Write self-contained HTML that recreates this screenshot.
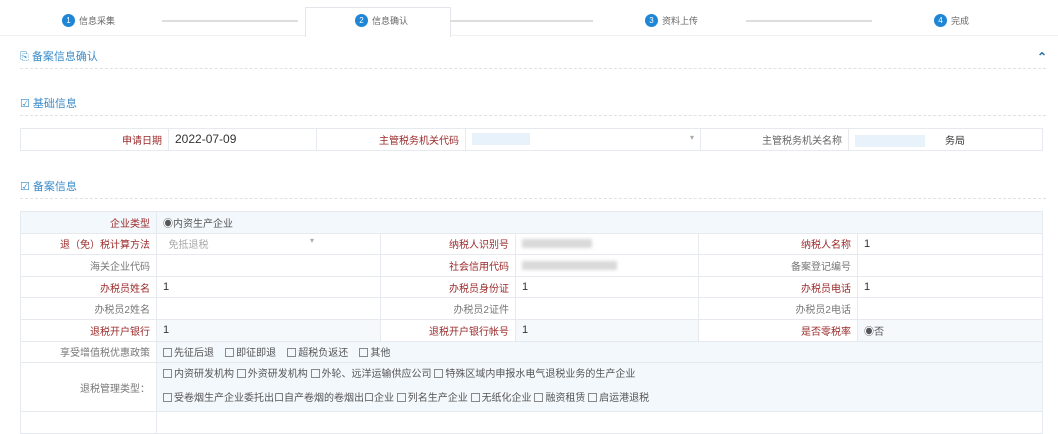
<!DOCTYPE html>
<html><head><meta charset="utf-8"><style>
*{margin:0;padding:0;box-sizing:border-box}
body{width:1058px;height:419px;overflow:hidden;background:#fff;font-family:"Liberation Sans","Noto Sans CJK SC",sans-serif;font-size:10px;color:#555;position:relative}
.abs{position:absolute}
.tabs{position:absolute;left:0;top:0;width:1058px;height:36px;border-bottom:1px solid #eef0f2}
.tab{position:absolute;top:14px;font-size:9px;color:#666;display:flex;align-items:center}
.num{width:13px;height:13px;border-radius:50%;background:#1f86d6;color:#fff;font-size:8px;display:inline-flex;align-items:center;justify-content:center;margin-right:4px}
.line{position:absolute;top:20px;height:2px;background:#ddd}
.act{position:absolute;left:305px;top:7px;width:146px;height:30px;border:1px solid #e3e6ea;border-bottom:none;background:#fff}
.sec{position:absolute;left:20px;color:#3a8cc8;font-size:11px}
.dash{position:absolute;left:20px;width:1026px;border-top:1px dashed #dde2e6}
table{position:absolute;border-collapse:collapse;table-layout:fixed}
td{border:1px solid #e6eaee;height:21.6px;padding:0 6px;white-space:nowrap;overflow:hidden}
td.l{text-align:right;color:#777}
td.r{color:#9a2a2a}
td.v{color:#333;font-size:11px}
.cb{display:inline-block;width:9px;height:9px;border:1px solid #888;vertical-align:-1px;margin-right:2px}
.blur{display:inline-block;height:9px;background:#d9d9d9;filter:blur(1.5px);vertical-align:middle}
</style></head><body>
<div class="tabs"></div>
<div class="act"></div>
<div class="tab" style="left:62px"><span class="num">1</span>信息采集</div>
<div class="line" style="left:162px;width:136px"></div>
<div class="tab" style="left:355px"><span class="num">2</span>信息确认</div>
<div class="line" style="left:450px;width:143px"></div>
<div class="tab" style="left:645px"><span class="num">3</span>资料上传</div>
<div class="line" style="left:746px;width:126px"></div>
<div class="tab" style="left:934px"><span class="num">4</span>完成</div>

<div class="sec" style="top:48px">⎘ 备案信息确认</div>
<div class="abs" style="left:1037px;top:50px;color:#2b6f9e;font-size:12px;font-weight:bold">⌃</div>
<div class="dash" style="top:68px"></div>
<div class="sec" style="top:95px">☑ 基础信息</div>
<div class="dash" style="top:115px"></div>

<table style="left:20px;top:128px;width:1022px">
<colgroup><col style="width:148px"><col style="width:148px"><col style="width:149px"><col style="width:235px"><col style="width:148px"><col style="width:194px"></colgroup>
<tr><td class="l r">申请日期</td><td class="v" style="font-size:12px">2022-07-09</td><td class="l r">主管税务机关代码</td><td><span style="display:inline-block;width:58px;height:12px;background:#e8f2fa;vertical-align:middle"></span><span style="float:right;color:#aaa;font-size:8px">▾</span></td><td class="l" style="color:#666">主管税务机关名称</td><td class="v"><span style="display:inline-block;width:70px;height:12px;background:#e8f2fa;vertical-align:middle"></span><span style="margin-left:20px;font-size:10px">务局</span></td></tr>
</table>

<div class="sec" style="top:178px">☑ 备案信息</div>
<div class="dash" style="top:198px"></div>

<table style="left:20px;top:211px;width:1022px">
<colgroup><col style="width:136px"><col style="width:224px"><col style="width:135px"><col style="width:183px"><col style="width:159px"><col style="width:185px"></colgroup>
<tr style="background:#f3f8fc"><td class="l r">企业类型</td><td colspan="5">◉内资生产企业</td></tr>
<tr><td class="l r">退（免）税计算方法</td><td style="color:#aaa">&nbsp;&nbsp;免抵退税<span style="float:right;margin-right:60px;font-size:8px">▾</span></td><td class="l r">纳税人识别号</td><td><span class="blur" style="width:70px"></span></td><td class="l r">纳税人名称</td><td class="v">1</td></tr>
<tr><td class="l">海关企业代码</td><td></td><td class="l r">社会信用代码</td><td><span class="blur" style="width:95px"></span></td><td class="l">备案登记编号</td><td></td></tr>
<tr><td class="l r">办税员姓名</td><td class="v">1</td><td class="l r">办税员身份证</td><td class="v">1</td><td class="l r">办税员电话</td><td class="v">1</td></tr>
<tr><td class="l">办税员2姓名</td><td></td><td class="l">办税员2证件</td><td></td><td class="l">办税员2电话</td><td></td></tr>
<tr style="background:#f6f9fc"><td class="l r" style="background:#fff">退税开户银行</td><td class="v">1</td><td class="l r" style="background:#fff">退税开户银行帐号</td><td class="v">1</td><td class="l r" style="background:#fff">是否零税率</td><td>◉否</td></tr>
<tr style="background:#f3f8fc"><td class="l" style="background:#fff">享受增值税优惠政策</td><td colspan="5"><span class="cb"></span>先征后退 &nbsp;&nbsp; <span class="cb"></span>即征即退 &nbsp;&nbsp; <span class="cb"></span>超税负返还 &nbsp;&nbsp; <span class="cb"></span>其他</td></tr>
<tr style="background:#f3f8fc"><td class="l" style="background:#fff;height:49px">退税管理类型：</td><td colspan="5" style="line-height:24px"><span class="cb"></span>内资研发机构 <span class="cb"></span>外资研发机构 <span class="cb"></span>外轮、远洋运输供应公司 <span class="cb"></span>特殊区域内申报水电气退税业务的生产企业<br><span class="cb"></span>受卷烟生产企业委托出口自产卷烟的卷烟出口企业 <span class="cb"></span>列名生产企业 <span class="cb"></span>无纸化企业 <span class="cb"></span>融资租赁 <span class="cb"></span>启运港退税</td></tr>
<tr><td class="l" style="background:#fff"></td><td colspan="5"></td></tr>
</table>
</body></html>
